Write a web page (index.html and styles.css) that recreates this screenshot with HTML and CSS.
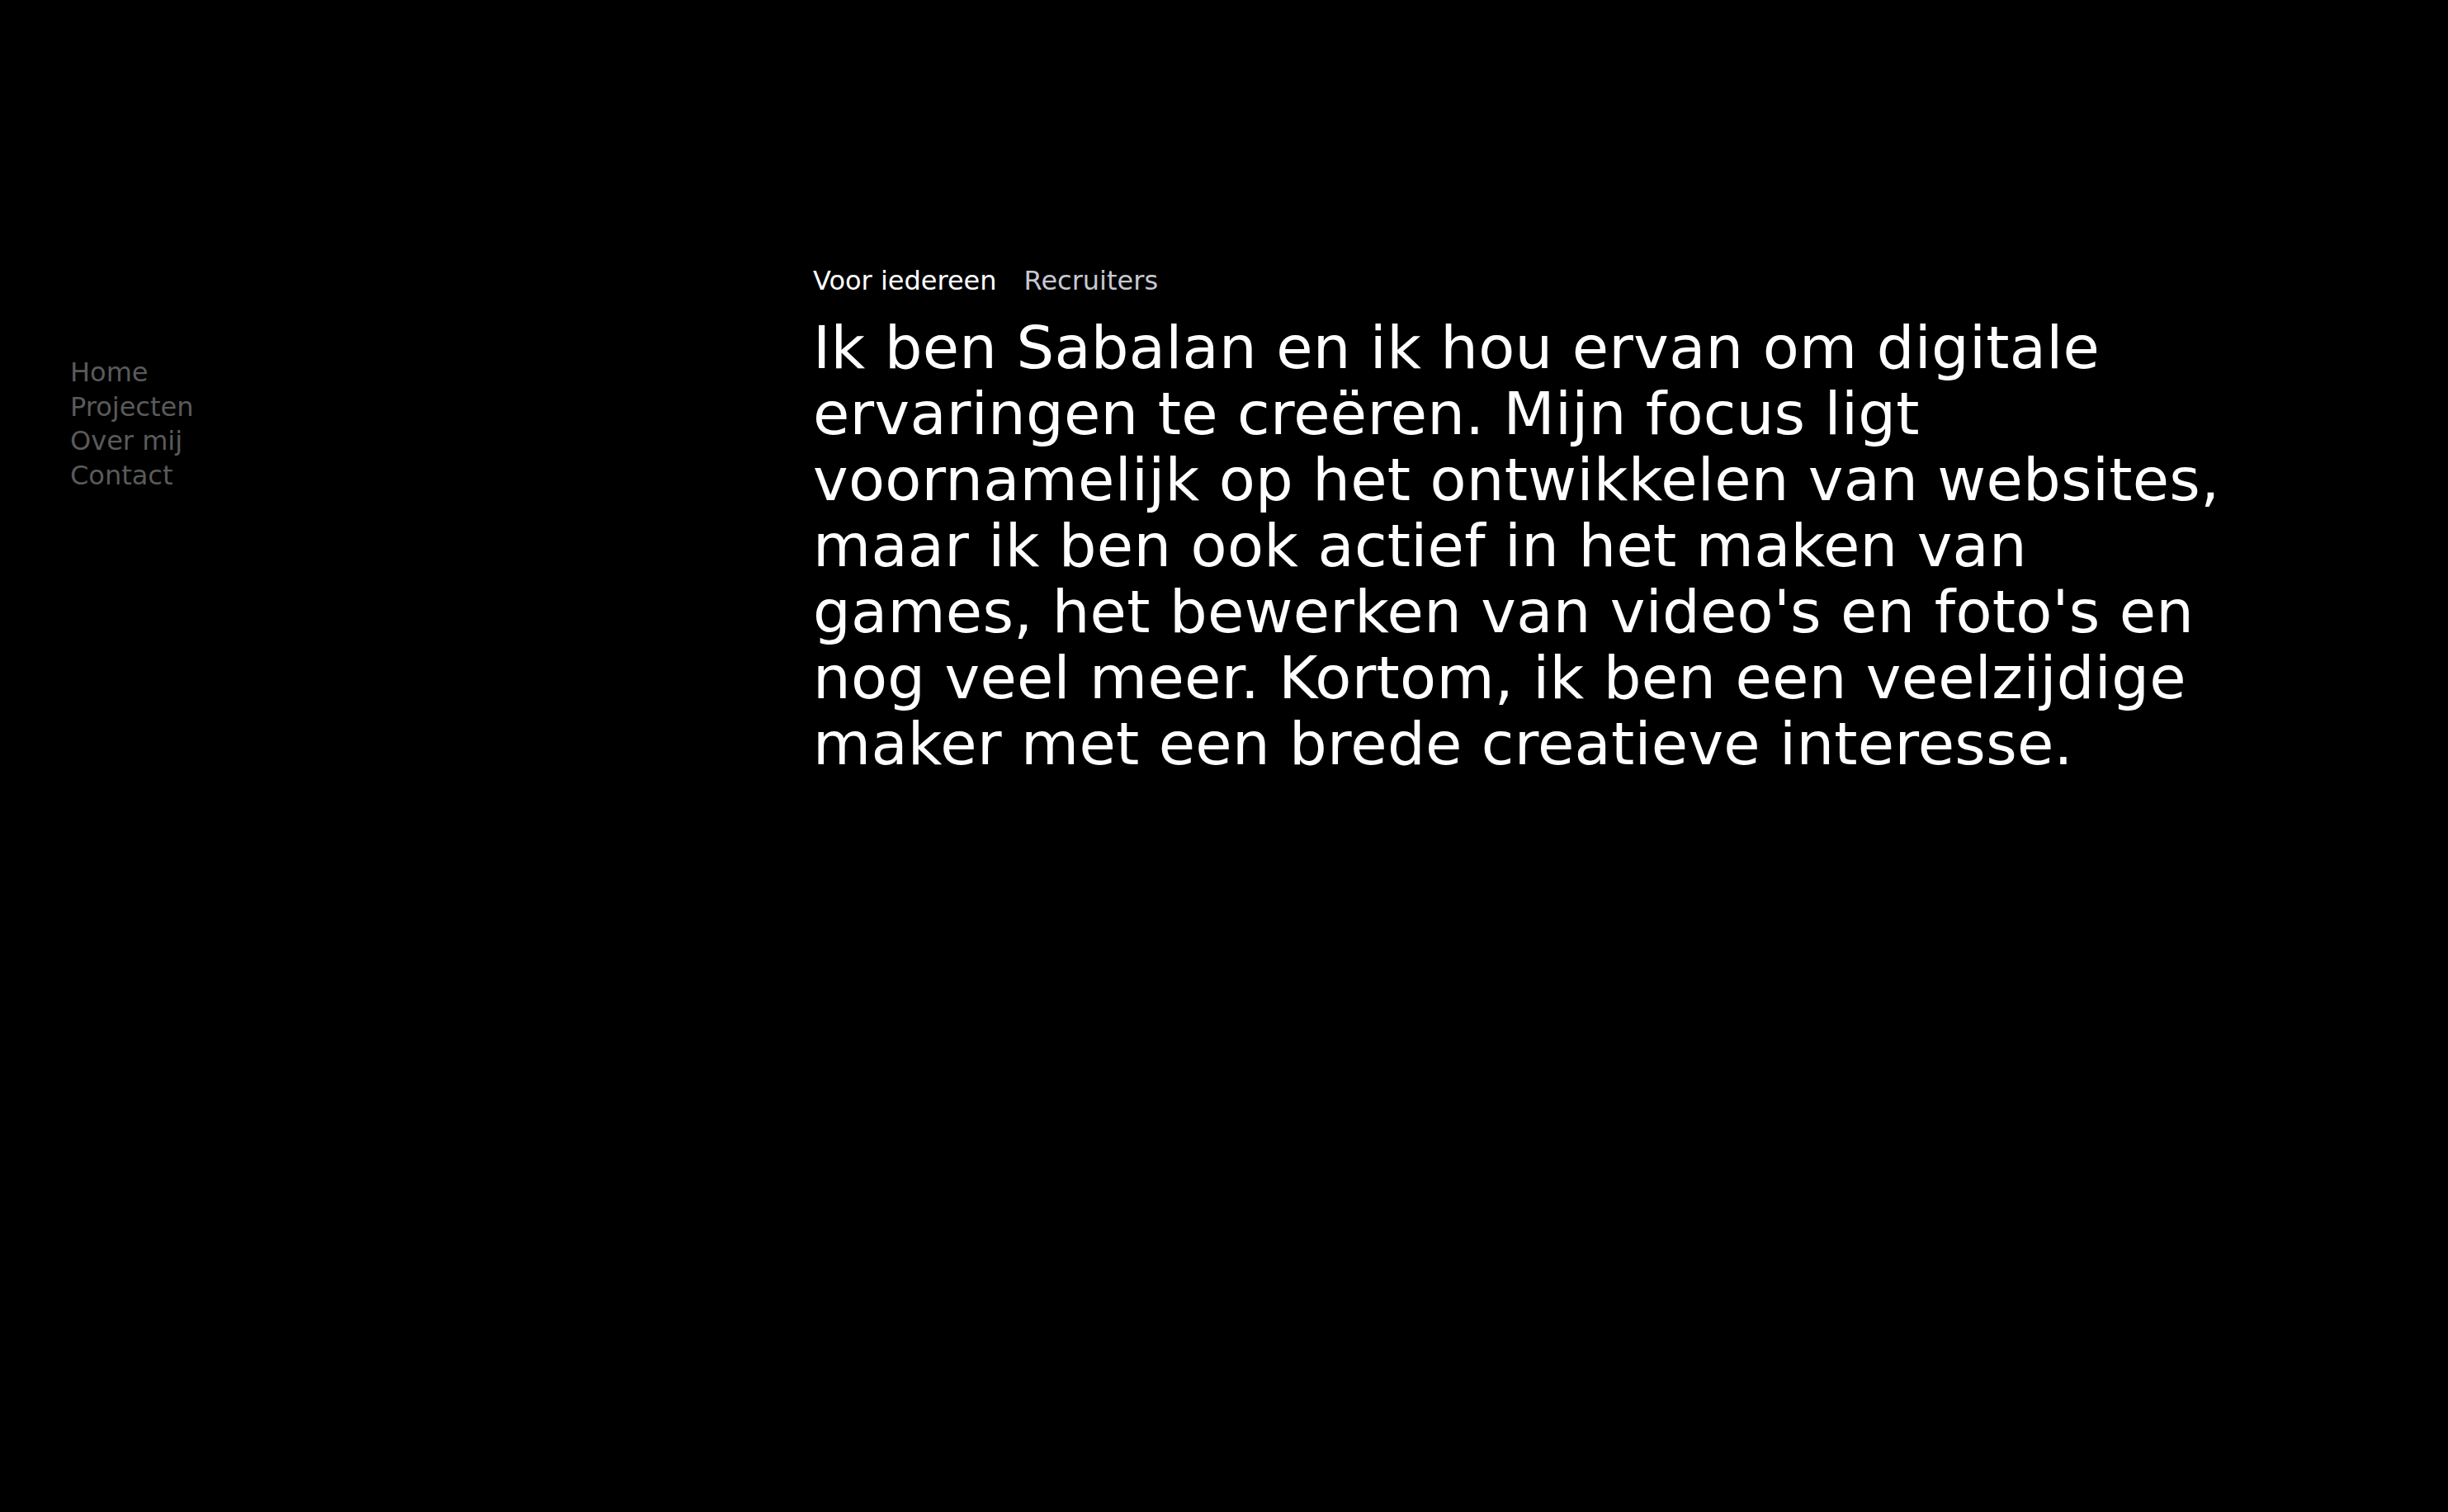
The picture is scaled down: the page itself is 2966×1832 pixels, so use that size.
FILE: index.html
```html
<!DOCTYPE html>
<html lang="nl">
<head>
<meta charset="utf-8">
<title>Sabalan</title>
<link rel="stylesheet" href="styles.css">
</head>
<body>
<div class="page">
  <nav class="side-nav">
    <a href="#">Home</a>
    <a href="#">Projecten</a>
    <a href="#">Over mij</a>
    <a href="#">Contact</a>
  </nav>
  <main class="content">
    <div class="tabs">
      <span class="tab active">Voor iedereen</span>
      <span class="tab">Recruiters</span>
    </div>
    <p class="intro">Ik ben Sabalan en ik hou ervan om digitale ervaringen te creëren. Mijn focus ligt voornamelijk op het ontwikkelen van websites, maar ik ben ook actief in het maken van games, het bewerken van video's en foto's en nog veel meer. Kortom, ik ben een veelzijdige maker met een brede creatieve interesse.</p>
  </main>
</div>
</body>
</html>
```

FILE: styles.css
```css
html, body {
  margin: 0;
  padding: 0;
  background: #000;
  height: 100%;
}
body {
  font-family: "DejaVu Sans", Verdana, sans-serif;
  color: #fff;
}
.page {
  display: flex;
  align-items: flex-start;
  padding-top: 322px;
  min-height: 100%;
  box-sizing: border-box;
}
.side-nav {
  width: 900px;
  padding-left: 85px;
  margin-top: 109px;
  display: flex;
  flex-direction: column;
  font-size: 32px;
  line-height: 41.6px;
}
.side-nav a {
  color: #5a5a5a;
  text-decoration: none;
}
.content {
  width: 1740px;
}
.tabs {
  display: flex;
  gap: 33px;
  font-size: 32px;
  line-height: 37px;
}
.tab {
  color: #c8c8d0;
}
.tab.active {
  color: #fff;
}
.intro {
  margin: 22px 0 0;
  font-size: 72px;
  line-height: 80px;
  letter-spacing: 0.3px;
}
```
